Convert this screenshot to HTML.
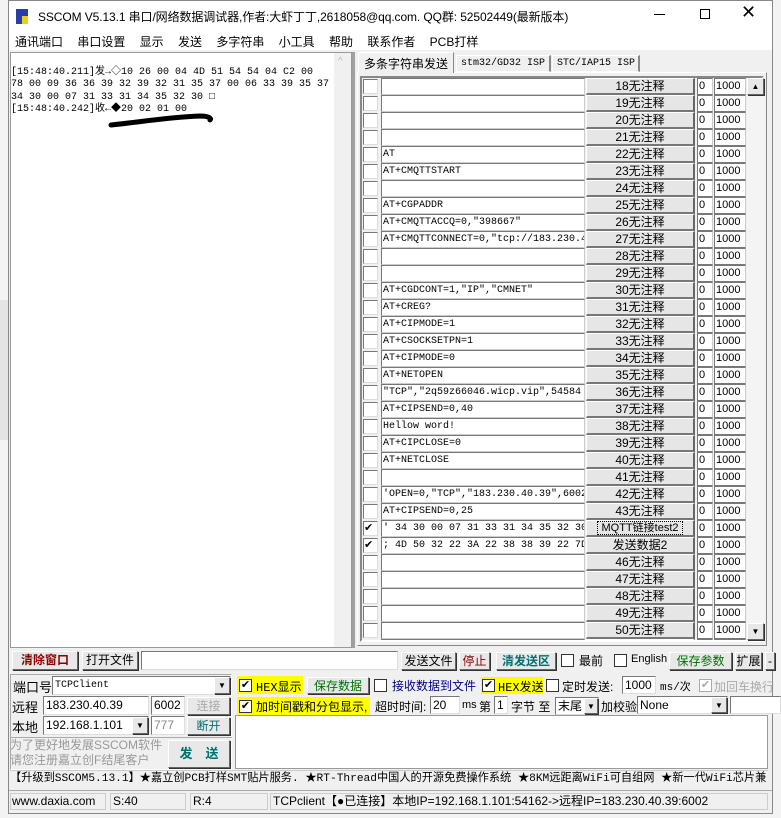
<!DOCTYPE html><html><head><meta charset="utf-8"><style>
*{box-sizing:border-box;margin:0;padding:0}
body{width:781px;height:818px;background:#f3f3f3;position:relative;overflow:hidden;font-family:"Liberation Sans","Noto Sans CJK SC",sans-serif;font-size:12px;color:#000}
.a{position:absolute;white-space:nowrap}
.win{position:absolute;left:8px;top:0;width:765px;height:814px;background:#f0f0f0;border:1px solid #888}
.btn{position:absolute;background:#e8e8e8;border:1px solid #fff;border-right-color:#666;border-bottom-color:#666;box-shadow:1px 1px 0 #333;text-align:center;font-size:12px;line-height:16px;white-space:nowrap}
.inp{position:absolute;background:#fff;border:1px solid #777;border-right-color:#ddd;border-bottom-color:#ddd;font-size:12px;line-height:16px;padding-left:2px;white-space:nowrap;overflow:hidden}
.cb{position:absolute;width:13px;height:13px;background:#fff;border:1px solid #333;font-size:11px;line-height:11px;text-align:center}
.mono{font-family:"Liberation Mono","Noto Sans CJK SC",monospace}
.row{position:absolute;left:361px;height:17px;width:386px}
.row .c{position:absolute;left:2px;top:1px;width:15px;height:15px;background:#fff;border:1px solid #777;border-right-color:#ddd;border-bottom-color:#ddd;font-size:11px;line-height:12px}
.row .t{position:absolute;left:20px;top:0;width:204px;height:17px;background:#fff;border:1px solid #777;border-right-color:#ccc;border-bottom-color:#ccc;font-family:"Liberation Mono","Noto Sans CJK SC",monospace;font-size:10px;line-height:15px;padding-left:1px;overflow:hidden;white-space:nowrap}
.row .b{position:absolute;left:225px;top:0;width:109px;height:17px;background:#e6e6e6;border:1px solid #fff;border-right:2px solid #666;border-bottom:2px solid #777;text-align:center;font-size:12px;line-height:15px;white-space:nowrap;font-family:"Liberation Sans","Noto Sans CJK SC",sans-serif}
.row .n{position:absolute;left:336px;top:0;width:16px;height:17px;background:#fff;border:1px solid #777;border-right-color:#ccc;font-size:11px;line-height:15px;padding-left:1px}
.row .i{position:absolute;left:353px;top:0;width:32px;height:17px;background:#fff;border:1px solid #777;border-right-color:#ccc;font-size:11px;line-height:15px;padding-left:1px}
</style></head><body>
<div class="a" style="left:0;top:300px;width:8px;height:140px;background:#e4e4e4"></div>
<div class="win"></div>
<!-- title -->
<div class="a" style="left:9px;top:1px;width:763px;height:31px;background:#fff"></div>
<div class="a" style="left:16px;top:9px;width:12px;height:15px;background:#2a3ea8"></div>
<div class="a" style="left:22px;top:16px;width:6px;height:8px;background:#e8d020"></div>
<div class="a" style="left:38px;top:8px;font-size:12px;letter-spacing:-0.1px">SSCOM V5.13.1 串口/网络数据调试器,作者:大虾丁丁,2618058@qq.com. QQ群: 52502449(最新版本)</div>
<div class="a" style="left:654px;top:14px;width:11px;height:1px;background:#000"></div>
<div class="a" style="left:700px;top:9px;width:10px;height:10px;border:1px solid #000"></div>
<div class="a" style="left:741px;top:2px;font-size:18px;font-weight:300">✕</div>
<!-- menu -->
<div class="a" style="left:9px;top:32px;width:763px;height:18px;background:#fff"></div>
<div class="a" style="left:15px;top:33px;font-size:12px;word-spacing:11px">通讯端口 串口设置 显示 发送 多字符串 小工具 帮助 联系作者 PCB打样</div>
<!-- receive -->
<div class="a" style="left:10px;top:52px;width:342px;height:596px;background:#fff;border:1px solid #999"></div>
<div class="a" style="left:334px;top:53px;width:17px;height:594px;background:#f0f0f0"></div>
<div class="a" style="left:338px;top:56px;color:#bbb;font-size:10px">^</div>
<div class="a" style="left:352px;top:52px;width:3px;height:596px;background:#a0a0a0"></div>
<div class="a mono" style="left:11px;top:67px;font-size:10px;line-height:12.3px">[15:48:40.211]发→◇10 26 00 04 4D 51 54 54 04 C2 00<br>78 00 09 36 36 39 32 39 32 31 35 37 00 06 33 39 35 37<br>34 30 00 07 31 33 31 34 35 32 30 □<br>[15:48:40.242]收←◆20 02 01 00</div>
<svg class="a" style="left:0;top:0" width="260" height="140"><path d="M111 125 C140 122 170 117 200 116 C208 116 212 118 210 120" stroke="#000" stroke-width="5" fill="none" stroke-linecap="round"/></svg>
<!-- right panel -->
<div class="a" style="left:357px;top:72px;width:410px;height:574px;border:1px solid #fff;border-right-color:#888;border-bottom-color:#888"></div>
<div class="a" style="left:358px;top:52px;width:96px;height:21px;background:#f0f0f0;border:1px solid #fff;border-right-color:#888;border-bottom:none;font-size:12px;padding:2px 0 0 5px">多条字符串发送</div>
<div class="a mono" style="left:456px;top:55px;width:95px;height:17px;border:1px solid #fff;border-right:2px solid #888;font-size:10px;padding:2px 0 0 4px">stm32/GD32 ISP</div>
<div class="a mono" style="left:552px;top:55px;width:88px;height:17px;border:1px solid #fff;border-right:2px solid #888;font-size:10px;padding:2px 0 0 4px">STC/IAP15 ISP</div>
<div class="a" style="left:360px;top:76px;width:404px;height:566px;border:2px solid #888;border-right-color:#fff;border-bottom-color:#fff;overflow:hidden"></div>
<div class="a" style="left:747px;top:78px;width:18px;height:562px;background:#f4f4f4"></div>
<div class="btn" style="left:747px;top:78px;width:17px;height:17px;font-size:8px;line-height:15px">▲</div>
<div class="btn" style="left:747px;top:623px;width:17px;height:17px;font-size:8px;line-height:15px">▼</div>
<div class="a" style="left:361px;top:78px;width:386px;height:562px;overflow:hidden">
<div style="position:relative;left:-361px;top:-78px">
<div class="row" style="top:78px"><div class="c"></div><div class="t"></div><div class="b">18无注释</div><div class="n">0</div><div class="i">1000</div></div>
<div class="row" style="top:95px"><div class="c"></div><div class="t"></div><div class="b">19无注释</div><div class="n">0</div><div class="i">1000</div></div>
<div class="row" style="top:112px"><div class="c"></div><div class="t"></div><div class="b">20无注释</div><div class="n">0</div><div class="i">1000</div></div>
<div class="row" style="top:129px"><div class="c"></div><div class="t"></div><div class="b">21无注释</div><div class="n">0</div><div class="i">1000</div></div>
<div class="row" style="top:146px"><div class="c"></div><div class="t">AT</div><div class="b">22无注释</div><div class="n">0</div><div class="i">1000</div></div>
<div class="row" style="top:163px"><div class="c"></div><div class="t">AT+CMQTTSTART</div><div class="b">23无注释</div><div class="n">0</div><div class="i">1000</div></div>
<div class="row" style="top:180px"><div class="c"></div><div class="t"></div><div class="b">24无注释</div><div class="n">0</div><div class="i">1000</div></div>
<div class="row" style="top:197px"><div class="c"></div><div class="t">AT+CGPADDR</div><div class="b">25无注释</div><div class="n">0</div><div class="i">1000</div></div>
<div class="row" style="top:214px"><div class="c"></div><div class="t">AT+CMQTTACCQ=0,"398667"</div><div class="b">26无注释</div><div class="n">0</div><div class="i">1000</div></div>
<div class="row" style="top:231px"><div class="c"></div><div class="t">AT+CMQTTCONNECT=0,"tcp://183.230.4</div><div class="b">27无注释</div><div class="n">0</div><div class="i">1000</div></div>
<div class="row" style="top:248px"><div class="c"></div><div class="t"></div><div class="b">28无注释</div><div class="n">0</div><div class="i">1000</div></div>
<div class="row" style="top:265px"><div class="c"></div><div class="t"></div><div class="b">29无注释</div><div class="n">0</div><div class="i">1000</div></div>
<div class="row" style="top:282px"><div class="c"></div><div class="t">AT+CGDCONT=1,"IP","CMNET"</div><div class="b">30无注释</div><div class="n">0</div><div class="i">1000</div></div>
<div class="row" style="top:299px"><div class="c"></div><div class="t">AT+CREG?</div><div class="b">31无注释</div><div class="n">0</div><div class="i">1000</div></div>
<div class="row" style="top:316px"><div class="c"></div><div class="t">AT+CIPMODE=1</div><div class="b">32无注释</div><div class="n">0</div><div class="i">1000</div></div>
<div class="row" style="top:333px"><div class="c"></div><div class="t">AT+CSOCKSETPN=1</div><div class="b">33无注释</div><div class="n">0</div><div class="i">1000</div></div>
<div class="row" style="top:350px"><div class="c"></div><div class="t">AT+CIPMODE=0</div><div class="b">34无注释</div><div class="n">0</div><div class="i">1000</div></div>
<div class="row" style="top:367px"><div class="c"></div><div class="t">AT+NETOPEN</div><div class="b">35无注释</div><div class="n">0</div><div class="i">1000</div></div>
<div class="row" style="top:384px"><div class="c"></div><div class="t">"TCP","2q59z66046.wicp.vip",54584</div><div class="b">36无注释</div><div class="n">0</div><div class="i">1000</div></div>
<div class="row" style="top:401px"><div class="c"></div><div class="t">AT+CIPSEND=0,40</div><div class="b">37无注释</div><div class="n">0</div><div class="i">1000</div></div>
<div class="row" style="top:418px"><div class="c"></div><div class="t">Hellow word!</div><div class="b">38无注释</div><div class="n">0</div><div class="i">1000</div></div>
<div class="row" style="top:435px"><div class="c"></div><div class="t">AT+CIPCLOSE=0</div><div class="b">39无注释</div><div class="n">0</div><div class="i">1000</div></div>
<div class="row" style="top:452px"><div class="c"></div><div class="t">AT+NETCLOSE</div><div class="b">40无注释</div><div class="n">0</div><div class="i">1000</div></div>
<div class="row" style="top:469px"><div class="c"></div><div class="t"></div><div class="b">41无注释</div><div class="n">0</div><div class="i">1000</div></div>
<div class="row" style="top:486px"><div class="c"></div><div class="t">'OPEN=0,"TCP","183.230.40.39",6002</div><div class="b">42无注释</div><div class="n">0</div><div class="i">1000</div></div>
<div class="row" style="top:503px"><div class="c"></div><div class="t">AT+CIPSEND=0,25</div><div class="b">43无注释</div><div class="n">0</div><div class="i">1000</div></div>
<div class="row" style="top:520px"><div class="c">✔</div><div class="t">' 34 30 00 07 31 33 31 34 35 32 30</div><div class="b" style="font-size:11px"><span style="border:1px dotted #000;padding:0 3px">MQTT链接test2</span></div><div class="n">0</div><div class="i">1000</div></div>
<div class="row" style="top:537px"><div class="c">✔</div><div class="t">; 4D 50 32 22 3A 22 38 38 39 22 7D</div><div class="b">发送数据2</div><div class="n">0</div><div class="i">1000</div></div>
<div class="row" style="top:554px"><div class="c"></div><div class="t"></div><div class="b">46无注释</div><div class="n">0</div><div class="i">1000</div></div>
<div class="row" style="top:571px"><div class="c"></div><div class="t"></div><div class="b">47无注释</div><div class="n">0</div><div class="i">1000</div></div>
<div class="row" style="top:588px"><div class="c"></div><div class="t"></div><div class="b">48无注释</div><div class="n">0</div><div class="i">1000</div></div>
<div class="row" style="top:605px"><div class="c"></div><div class="t"></div><div class="b">49无注释</div><div class="n">0</div><div class="i">1000</div></div>
<div class="row" style="top:622px"><div class="c"></div><div class="t"></div><div class="b">50无注释</div><div class="n">0</div><div class="i">1000</div></div>
<div class="row" style="top:639px"><div class="c"></div><div class="t"></div><div class="b">51无注释</div><div class="n">0</div><div class="i">1000</div></div>
</div></div>
<!-- toolbar -->
<div class="btn" style="left:12px;top:651px;width:66px;height:19px;color:#8b0000;font-weight:bold;line-height:17px">清除窗口</div>
<div class="btn" style="left:82px;top:651px;width:56px;height:19px;line-height:17px">打开文件</div>
<div class="inp" style="left:141px;top:651px;width:257px;height:19px"></div>
<div class="btn" style="left:401px;top:652px;width:55px;height:18px">发送文件</div>
<div class="btn" style="left:459px;top:652px;width:31px;height:18px;color:#8b0000">停止</div>
<div class="btn" style="left:496px;top:652px;width:60px;height:18px;color:#007070;font-weight:bold">清发送区</div>
<div class="cb" style="left:561px;top:654px"></div><div class="a" style="left:579px;top:652px">最前</div>
<div class="cb" style="left:614px;top:654px"></div><div class="a" style="left:631px;top:653px;font-size:11px">English</div>
<div class="btn" style="left:669px;top:652px;width:63px;height:18px;color:#007000">保存参数</div>
<div class="btn" style="left:735px;top:652px;width:27px;height:18px">扩展</div>
<div class="btn" style="left:765px;top:652px;width:10px;height:18px">-</div>
<!-- left group -->
<div class="a" style="left:10px;top:674px;width:222px;height:96px;border:1px solid #aaa;border-right-color:#fff;border-bottom-color:#fff"></div>
<div class="a" style="left:13px;top:677px;font-size:13px">端口号</div>
<div class="inp mono" style="left:52px;top:676px;width:179px;height:19px;font-size:10px;line-height:17px">TCPClient</div>
<div class="btn" style="left:214px;top:677px;width:16px;height:17px;font-size:8px">▼</div>
<div class="a" style="left:12px;top:697px;font-size:13px">远程</div>
<div class="inp" style="left:43px;top:696px;width:106px;height:19px">183.230.40.39</div>
<div class="inp" style="left:151px;top:696px;width:34px;height:19px">6002</div>
<div class="btn" style="left:187px;top:697px;width:43px;height:18px;color:#aaa">连接</div>
<div class="a" style="left:12px;top:717px;font-size:13px">本地</div>
<div class="inp" style="left:43px;top:716px;width:106px;height:19px">192.168.1.101</div>
<div class="btn" style="left:132px;top:717px;width:16px;height:17px;font-size:8px">▼</div>
<div class="inp" style="left:151px;top:716px;width:34px;height:19px;color:#888">777</div>
<div class="btn" style="left:187px;top:717px;width:43px;height:18px;color:#007070">断开</div>
<div class="a" style="left:10px;top:737px;width:222px;height:1px;background:#aaa"></div>
<div class="a" style="left:10px;top:738px;color:#999;font-size:12px;line-height:15px">为了更好地发展SSCOM软件<br>请您注册嘉立创F结尾客户</div>
<div class="btn" style="left:168px;top:740px;width:62px;height:28px;color:#007070;font-weight:bold;font-size:13px;line-height:26px">发　送</div>
<!-- options -->
<div class="a" style="left:237px;top:676px;width:66px;height:18px;background:#ff0"></div>
<div class="cb" style="left:239px;top:679px">✔</div><div class="a mono" style="left:256px;top:678px">HEX显示</div>
<div class="btn" style="left:307px;top:677px;width:62px;height:17px;color:#007000">保存数据</div>
<div class="cb" style="left:374px;top:679px"></div><div class="a" style="left:392px;top:677px;color:#000080">接收数据到文件</div>
<div class="a" style="left:481px;top:677px;width:62px;height:17px;background:#ff0"></div>
<div class="cb" style="left:482px;top:679px">✔</div><div class="a mono" style="left:498px;top:678px">HEX发送</div>
<div class="cb" style="left:546px;top:679px"></div><div class="a" style="left:562px;top:678px">定时发送:</div>
<div class="inp" style="left:622px;top:676px;width:34px;height:18px">1000</div>
<div class="a mono" style="left:660px;top:678px;font-size:11px">ms/次</div>
<div class="cb" style="left:699px;top:679px;border-color:#aaa;color:#aaa">✔</div><div class="a" style="left:714px;top:678px;color:#aaa">加回车换行</div>
<div class="a" style="left:237px;top:697px;width:133px;height:18px;background:#ff0"></div>
<div class="cb" style="left:239px;top:700px">✔</div><div class="a" style="left:256px;top:698px">加时间戳和分包显示,</div>
<div class="a" style="left:375px;top:698px">超时时间:</div>
<div class="inp" style="left:430px;top:696px;width:30px;height:18px">20</div>
<div class="a" style="left:462px;top:699px;font-size:11px">ms</div>
<div class="a" style="left:479px;top:698px">第</div>
<div class="inp" style="left:494px;top:696px;width:14px;height:18px">1</div>
<div class="a" style="left:511px;top:698px">字节 至</div>
<div class="inp" style="left:555px;top:697px;width:44px;height:18px">末尾</div>
<div class="btn" style="left:584px;top:698px;width:14px;height:16px;font-size:8px">▼</div>
<div class="a" style="left:601px;top:698px">加校验</div>
<div class="inp" style="left:637px;top:696px;width:91px;height:18px">None</div>
<div class="btn" style="left:711px;top:697px;width:16px;height:16px;font-size:8px">▼</div>
<div class="inp" style="left:730px;top:696px;width:51px;height:18px"></div>
<div class="inp" style="left:235px;top:715px;width:533px;height:54px;border-color:#999"></div>
<!-- marquee -->
<div class="a" style="left:10px;top:770px;width:758px;height:18px;border-top:1px solid #ccc;font-family:'Liberation Mono','Noto Sans CJK SC',monospace;font-size:11.2px;line-height:17px;overflow:hidden">【升级到SSCOM5.13.1】★嘉立创PCB打样SMT贴片服务. ★RT-Thread中国人的开源免费操作系统 ★8KM远距离WiFi可自组网 ★新一代WiFi芯片兼</div>
<!-- status -->
<div class="a" style="left:9px;top:790px;width:763px;height:1px;background:#aaa"></div>
<div class="a" style="left:10px;top:793px;width:96px;height:17px;border:1px solid #ccc;padding-left:1px;line-height:15px">www.daxia.com</div>
<div class="a" style="left:110px;top:793px;width:76px;height:17px;border:1px solid #ccc;padding-left:2px;line-height:15px">S:40</div>
<div class="a" style="left:190px;top:793px;width:78px;height:17px;border:1px solid #ccc;padding-left:2px;line-height:15px">R:4</div>
<div class="a" style="left:270px;top:793px;width:498px;height:17px;border:1px solid #ccc;padding-left:2px;line-height:15px">TCPclient【●已连接】本地IP=192.168.1.101:54162-&gt;远程IP=183.230.40.39:6002</div>
</body></html>
